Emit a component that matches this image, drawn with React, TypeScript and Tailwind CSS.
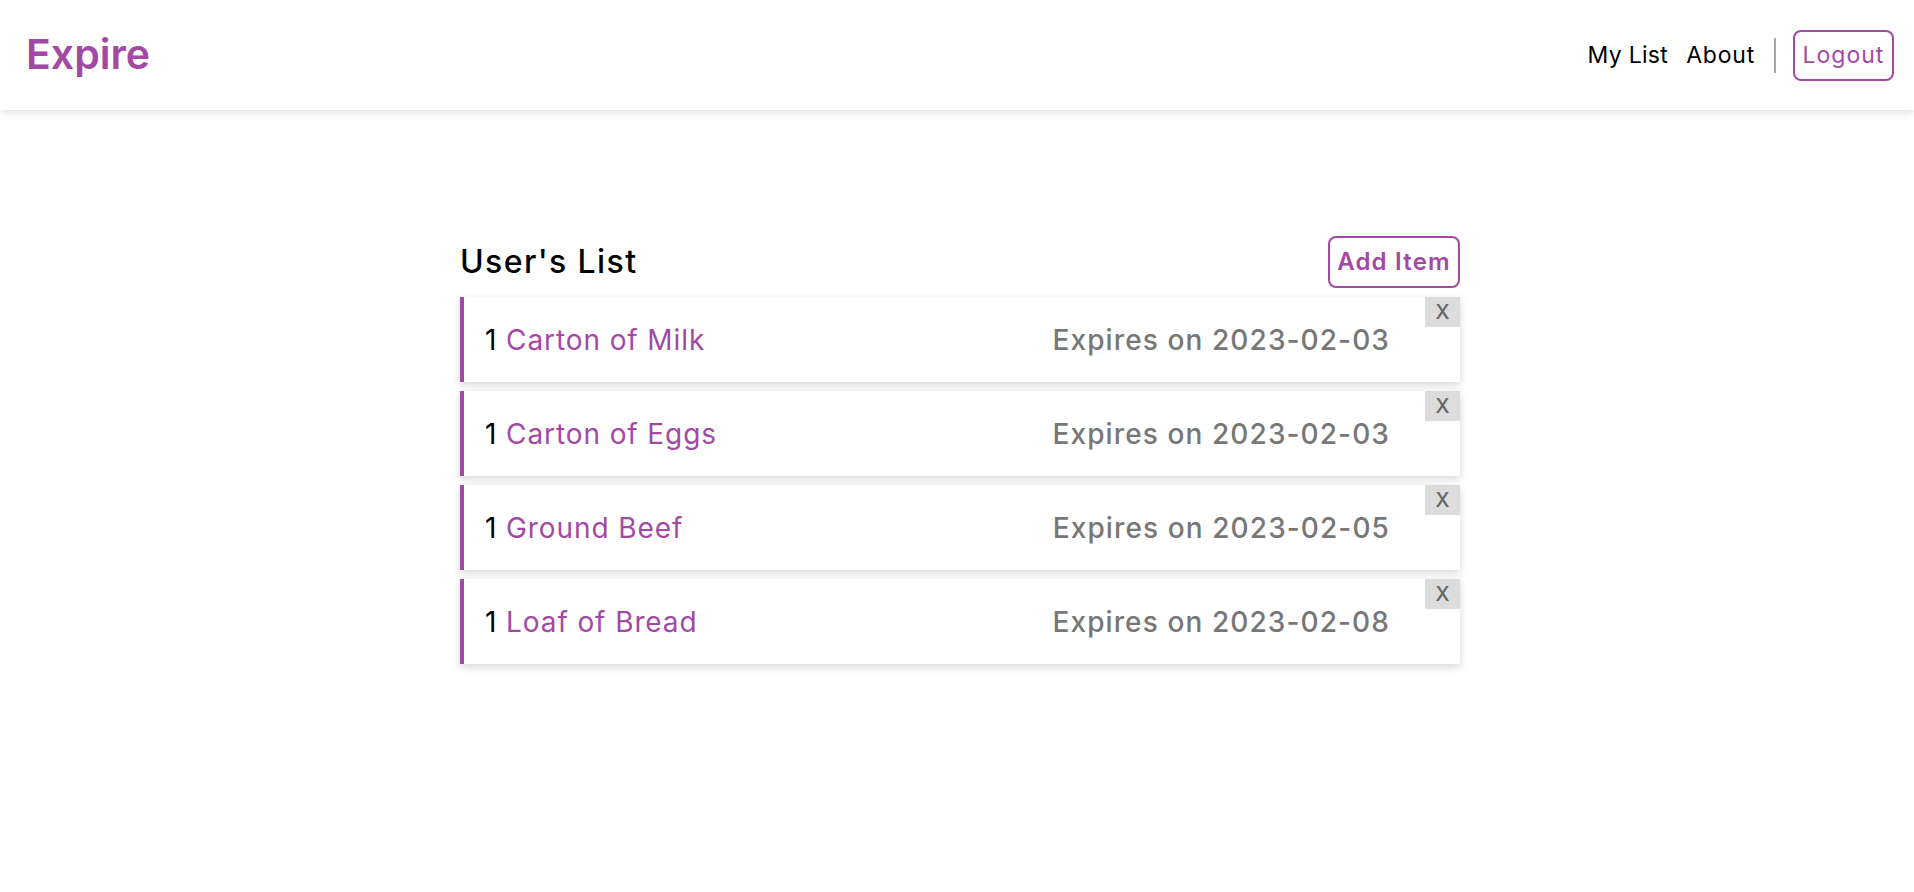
import React from 'react';

const items = [
  { qty: 1, name: 'Carton of Milk', expires: '2023-02-03' },
  { qty: 1, name: 'Carton of Eggs', expires: '2023-02-03' },
  { qty: 1, name: 'Ground Beef', expires: '2023-02-05' },
  { qty: 1, name: 'Loaf of Bread', expires: '2023-02-08' },
];

export default function App() {
  return (
    <div className="min-h-screen bg-white text-black font-['Inter',sans-serif]">
      {/* Top bar */}
      <header className="h-[110px] flex items-center justify-between pl-[26px] pr-[20px] shadow-[0_2px_8px_rgba(0,0,0,0.14)]">
        <a href="#" className="text-[41px] font-semibold text-[#a349a4]">
          Expire
        </a>
        <nav className="flex items-center text-[23px] tracking-[0.3px]">
          <a href="#">My List</a>
          <a href="#" className="ml-[18px] tracking-[0.8px]">About</a>
          <span className="ml-[19px] w-[2px] h-[35px] bg-[#aaaaaa]" />
          <button className="ml-[17px] w-[101px] h-[51px] rounded-lg border-2 border-[#a349a4] text-[#a349a4] tracking-[1px]">
            Logout
          </button>
        </nav>
      </header>

      <main className="w-[1000px] ml-[460px] mt-[126px]">
        <div className="flex items-center justify-between h-[52px]">
          <h1 className="text-[32px] font-medium tracking-[1.4px]">User's List</h1>
          <button className="w-[132px] h-[52px] rounded-lg border-2 border-[#a349a4] text-[24px] font-semibold tracking-[1.2px] text-[#a349a4]">
            Add Item
          </button>
        </div>

        <ul className="mt-[9px] flex flex-col gap-[9px]">
          {items.map((item) => (
            <li
              key={item.name}
              className="relative h-[85px] flex items-center justify-between bg-white border-l-4 border-[#a349a4] pl-[21px] pr-[70px] shadow-[0_3px_8px_rgba(0,0,0,0.16)]"
            >
              <div className="text-[28px] tracking-[0.9px]">
                <span>{item.qty}</span>{' '}
                <span className="text-[#a349a4]">{item.name}</span>
              </div>
              <div className="text-[28px] font-medium tracking-[1.1px] text-[#777777]">
                Expires on {item.expires}
              </div>
              <button className="absolute top-0 right-0 w-[35px] h-[30px] bg-[#dcdcdc] text-[20px] font-medium text-[#666666]">
                X
              </button>
            </li>
          ))}
        </ul>
      </main>
    </div>
  );
}
